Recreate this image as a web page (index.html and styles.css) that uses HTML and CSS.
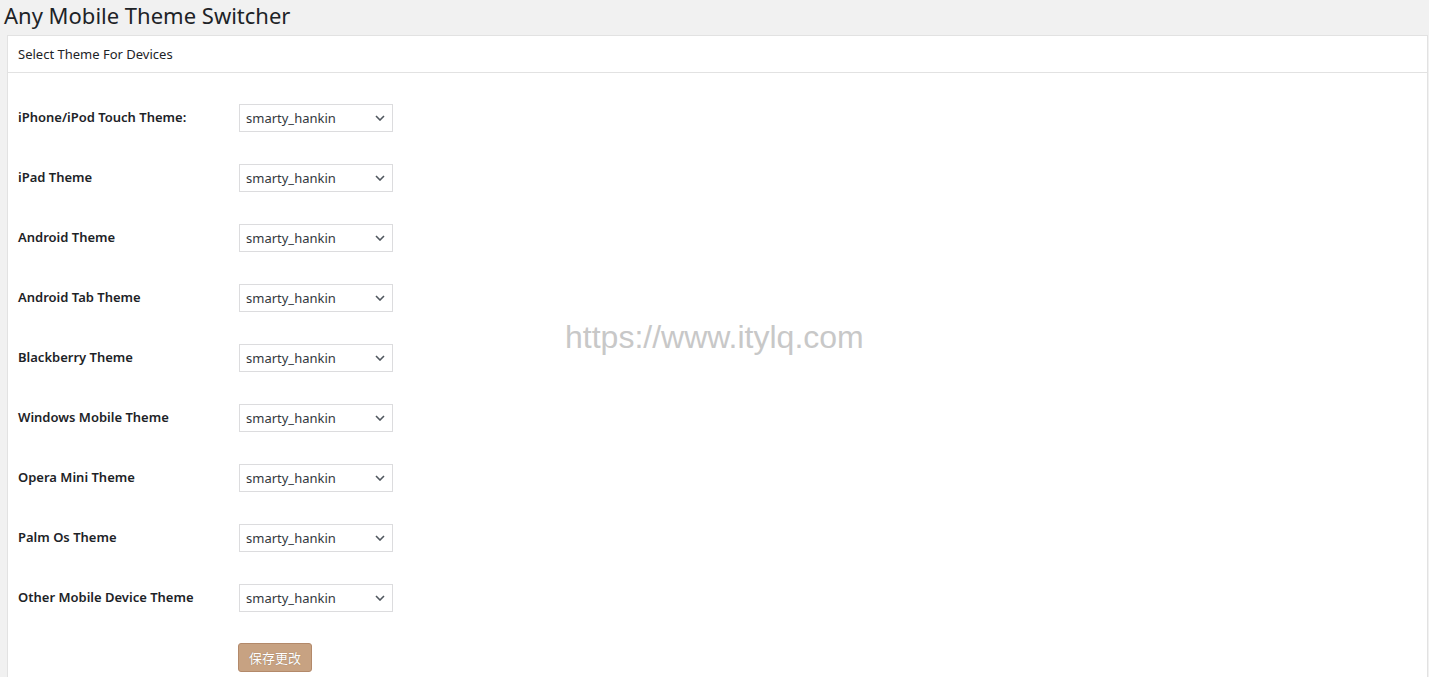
FILE: index.html
```html
<!DOCTYPE html>
<html>
<head>
<meta charset="utf-8">
<link rel="stylesheet" href="styles.css">
</head>
<body>
<h1 class="title">Any Mobile Theme Switcher</h1>
<div class="panel">
  <div class="panel-head">Select Theme For Devices</div>
  <form class="panel-body">
    <div class="row"><label class="lbl">iPhone/iPod Touch Theme:</label><div class="sel"><select><option>smarty_hankin</option></select><svg class="chev" width="10" height="6" viewBox="0 0 10 6"><path d="M1 1 L5 5 L9 1" fill="none" stroke="#50575e" stroke-width="1.6"/></svg></div></div>
    <div class="row"><label class="lbl">iPad Theme</label><div class="sel"><select><option>smarty_hankin</option></select><svg class="chev" width="10" height="6" viewBox="0 0 10 6"><path d="M1 1 L5 5 L9 1" fill="none" stroke="#50575e" stroke-width="1.6"/></svg></div></div>
    <div class="row"><label class="lbl">Android Theme</label><div class="sel"><select><option>smarty_hankin</option></select><svg class="chev" width="10" height="6" viewBox="0 0 10 6"><path d="M1 1 L5 5 L9 1" fill="none" stroke="#50575e" stroke-width="1.6"/></svg></div></div>
    <div class="row"><label class="lbl">Android Tab Theme</label><div class="sel"><select><option>smarty_hankin</option></select><svg class="chev" width="10" height="6" viewBox="0 0 10 6"><path d="M1 1 L5 5 L9 1" fill="none" stroke="#50575e" stroke-width="1.6"/></svg></div></div>
    <div class="row"><label class="lbl">Blackberry Theme</label><div class="sel"><select><option>smarty_hankin</option></select><svg class="chev" width="10" height="6" viewBox="0 0 10 6"><path d="M1 1 L5 5 L9 1" fill="none" stroke="#50575e" stroke-width="1.6"/></svg></div></div>
    <div class="row"><label class="lbl">Windows Mobile Theme</label><div class="sel"><select><option>smarty_hankin</option></select><svg class="chev" width="10" height="6" viewBox="0 0 10 6"><path d="M1 1 L5 5 L9 1" fill="none" stroke="#50575e" stroke-width="1.6"/></svg></div></div>
    <div class="row"><label class="lbl">Opera Mini Theme</label><div class="sel"><select><option>smarty_hankin</option></select><svg class="chev" width="10" height="6" viewBox="0 0 10 6"><path d="M1 1 L5 5 L9 1" fill="none" stroke="#50575e" stroke-width="1.6"/></svg></div></div>
    <div class="row"><label class="lbl">Palm Os Theme</label><div class="sel"><select><option>smarty_hankin</option></select><svg class="chev" width="10" height="6" viewBox="0 0 10 6"><path d="M1 1 L5 5 L9 1" fill="none" stroke="#50575e" stroke-width="1.6"/></svg></div></div>
    <div class="row"><label class="lbl">Other Mobile Device Theme</label><div class="sel"><select><option>smarty_hankin</option></select><svg class="chev" width="10" height="6" viewBox="0 0 10 6"><path d="M1 1 L5 5 L9 1" fill="none" stroke="#50575e" stroke-width="1.6"/></svg></div></div>
    <div class="row btn-row"><span class="lbl"></span><button type="button" class="btn">保存更改</button></div>
  </form>
  <div class="watermark">https://www.itylq.com</div>
</div>
</body>
</html>
```

FILE: styles.css
```css
html, body {
  margin: 0;
  padding: 0;
  background: #f1f1f1;
  font-family: "Noto Sans", "Open Sans", "Noto Sans CJK SC", sans-serif;
  color: #1d2327;
  height: 677px;
  overflow: hidden;
}
.title {
  margin: 0;
  padding: 0 0 0 4px;
  font-size: 22px;
  font-weight: 400;
  line-height: 31px;
  height: 35px;
  color: #1d2327;
}
.panel {
  position: relative;
  margin-left: 7px;
  margin-right: 1px;
  background: #fff;
  border: 1px solid #e2e2e2;
  border-bottom: none;
  height: 642px;
}
.panel-head {
  height: 36px;
  line-height: 36px;
  padding-left: 10px;
  font-size: 13px;
  color: #1d2327;
  border-bottom: 1px solid #e2e2e2;
}
.panel-body {
  padding: 31px 0 0 10px;
  display: flex;
  flex-direction: column;
  gap: 32px;
}
.row {
  display: flex;
  align-items: center;
  height: 28px;
}
.lbl {
  width: 221px;
  padding-bottom: 2px;
  font-size: 13px;
  font-weight: 600;
  color: #1d2327;
}
.sel {
  position: relative;
  width: 154px;
  height: 28px;
}
.sel select {
  appearance: none;
  -webkit-appearance: none;
  width: 154px;
  height: 28px;
  margin: 0;
  border: 1px solid #dcdcde;
  border-radius: 0;
  background: #fff;
  padding: 0 24px 0 6px;
  font-family: "Noto Sans", "Open Sans", sans-serif;
  font-size: 13px;
  color: #32373c;
  outline: none;
}
.chev {
  position: absolute;
  right: 8px;
  top: 11px;
  pointer-events: none;
}
.btn-row {
  height: 29px;
  margin-top: -1px;
}
.btn-row .lbl {
  width: 220px;
}
.btn {
  width: 74px;
  height: 29px;
  padding: 0;
  background: #c7a282;
  border: 1px solid #b3896a;
  border-radius: 3px;
  color: #fff;
  font-family: "Noto Sans CJK SC", sans-serif;
  font-size: 13px;
  text-shadow: 0 0 1px #8a6a50;
  cursor: pointer;
}
.watermark {
  position: absolute;
  left: 557px;
  top: 283px;
  font-family: "Liberation Sans", Arial, sans-serif;
  font-size: 32px;
  color: #c8c8c8;
  pointer-events: none;
}
```
